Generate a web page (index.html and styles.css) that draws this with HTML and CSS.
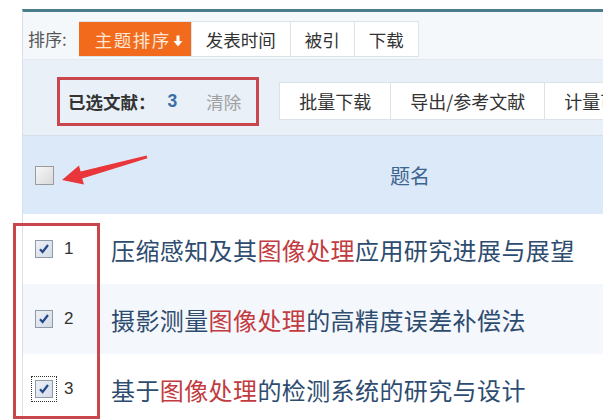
FILE: index.html
```html
<!DOCTYPE html>
<html lang="zh-CN">
<head>
<meta charset="utf-8">
<title>文献列表</title>
<link rel="stylesheet" href="styles.css">
</head>
<body>
<div class="panel">
  <div class="sortbar">
    <span class="sort-label">排序:</span>
    <div class="sort-group">
      <span class="sort-btn active">主题排序<svg class="down" viewBox="0 0 10 12" width="10" height="12"><path d="M3.5 0.5h3v5.5h3l-4.5 5.5l-4.5-5.5h3z" fill="#fff"/></svg></span>
      <span class="sort-btn">发表时间</span>
      <span class="sort-btn">被引</span>
      <span class="sort-btn">下载</span>
    </div>
  </div>
  <div class="toolbar">
    <div class="selected">已选文献：<b class="count">3</b><span class="clear">清除</span></div>
    <div class="tool-group">
      <span class="tool-btn">批量下载</span>
      <span class="tool-btn">导出/参考文献</span>
      <span class="tool-btn">计量可视化分析</span>
    </div>
  </div>
  <div class="thead">
    <div class="col-check"><span class="cb"></span></div>
    <div class="col-title">题名</div>
  </div>
  <div class="row">
    <div class="col-check"><span class="cb checked"><svg viewBox="0 0 12 12" width="12" height="12"><path d="M2 6.2l2.6 2.8l5.4-7" fill="none" stroke="#24488a" stroke-width="2.2"/></svg></span><span class="num">1</span></div>
    <div class="title">压缩感知及其<em>图像处理</em>应用研究进展与展望</div>
  </div>
  <div class="row alt">
    <div class="col-check"><span class="cb checked"><svg viewBox="0 0 12 12" width="12" height="12"><path d="M2 6.2l2.6 2.8l5.4-7" fill="none" stroke="#24488a" stroke-width="2.2"/></svg></span><span class="num">2</span></div>
    <div class="title">摄影测量<em>图像处理</em>的高精度误差补偿法</div>
  </div>
  <div class="row">
    <div class="col-check"><span class="cb checked focus"><svg viewBox="0 0 12 12" width="12" height="12"><path d="M2 6.2l2.6 2.8l5.4-7" fill="none" stroke="#24488a" stroke-width="2.2"/></svg></span><span class="num">3</span></div>
    <div class="title">基于<em>图像处理</em>的检测系统的研究与设计</div>
  </div>
</div>
<div class="annot-box"></div>
<svg class="annot-arrow" viewBox="0 0 603 420" width="603" height="420">
  <polygon points="62,180 79,165.5 80.6,171.4 146.6,155.6 147.4,158.2 82.2,178.4 84,184.5" fill="#e8363a"/>
</svg>
</body>
</html>
```

FILE: styles.css
```css
html, body {
  margin: 0;
  padding: 0;
}
body {
  width: 603px;
  height: 420px;
  overflow: hidden;
  background: #fff;
  position: relative;
  font-family: "Noto Sans CJK SC", "Liberation Sans", sans-serif;
  color: #333;
}
.panel {
  margin: 9px 0 0 22px;
  border-top: 3px solid #4b7d8b;
  border-left: 1px solid #d9e0e8;
  width: 700px;
}
.sortbar {
  display: flex;
  align-items: flex-start;
  height: 48px;
  padding-top: 9px;
  box-sizing: border-box;
  background: #f5f8fb;
  border-bottom: 1px solid #e1e8f0;
}
.sort-label {
  font-size: 17px;
  color: #555;
  line-height: 36px;
  margin-left: 5px;
}
.sort-group {
  display: flex;
  margin-left: 12px;
  border: 1px solid #dde3ea;
  border-left: none;
  height: 36px;
  box-sizing: border-box;
  background: #fff;
}
.sort-btn {
  display: flex;
  align-items: center;
  font-size: 17.5px;
  padding: 0 14px;
  border-left: 1px solid #dde3ea;
  color: #333;
}
.sort-btn.active {
  background: #f26b1d;
  color: #fde6d6;
  border-left-color: #f26b1d;
  padding: 0 8px 0 15px;
  letter-spacing: 1.5px;
}
.down {
  margin-left: 2px;
  margin-top: 3px;
}
.toolbar {
  display: flex;
  align-items: center;
  height: 76px;
  padding-top: 7px;
  box-sizing: border-box;
  background: #e9f0f8;
  border-bottom: 1px solid #d5dfeb;
  overflow: hidden;
}
.selected {
  display: flex;
  align-items: center;
  height: 49px;
  box-sizing: border-box;
  margin-left: 34px;
  padding: 0 15px 0 8px;
  border: 3px solid #c8464c;
  font-size: 17.5px;
  font-weight: bold;
  color: #333;
  flex: none;
}
.count {
  color: #3b6fa6;
  font-family: "Liberation Sans", sans-serif;
  margin-left: 12px;
}
.clear {
  font-weight: normal;
  color: #a0a0a0;
  margin-left: 29px;
}
.tool-group {
  display: flex;
  margin-left: 20px;
  height: 38px;
  background: #fff;
  border: 1px solid #dbe2ea;
  border-left: none;
  box-sizing: border-box;
  flex: none;
}
.tool-btn {
  display: flex;
  align-items: center;
  font-size: 18px;
  padding: 0 19px;
  border-left: 1px solid #dbe2ea;
  color: #333;
  white-space: nowrap;
}
.thead {
  display: flex;
  align-items: center;
  height: 78px;
  background: #dce9f8;
}
.col-check {
  width: 77px;
  display: flex;
  align-items: center;
  padding-left: 12px;
  box-sizing: border-box;
  flex: none;
}
.col-title {
  padding-left: 290px;
  font-size: 20px;
  color: #3d6590;
}
.cb {
  width: 19px;
  height: 19px;
  box-sizing: border-box;
  border: 1px solid #9b9b9b;
  background: linear-gradient(135deg, #f7f7f7, #d9d9d9);
  display: inline-flex;
  align-items: center;
  justify-content: center;
}
.cb.checked {
  width: 18px;
  height: 18px;
  border-color: #8f9aa8;
  background: linear-gradient(135deg, #eef1f6, #d3dbe6);
}
.cb.focus {
  outline: 1px dotted #333;
  outline-offset: 3px;
}
.num {
  font-family: "Liberation Sans", sans-serif;
  font-size: 17px;
  color: #333;
  margin-left: 11px;
}
.row {
  display: flex;
  align-items: center;
  height: 70px;
  background: #fff;
}
.row.alt {
  background: #f4f7fb;
}
.title {
  padding-left: 11px;
  font-size: 24px;
  letter-spacing: 0.4px;
  color: #2e4c70;
  white-space: nowrap;
}
.title em {
  font-style: normal;
  color: #c23b40;
}
.annot-box {
  position: absolute;
  left: 13px;
  top: 223px;
  width: 87px;
  height: 196px;
  box-sizing: border-box;
  border: 3px solid #c8464c;
}
.annot-arrow {
  position: absolute;
  left: 0;
  top: 0;
  pointer-events: none;
}
```
